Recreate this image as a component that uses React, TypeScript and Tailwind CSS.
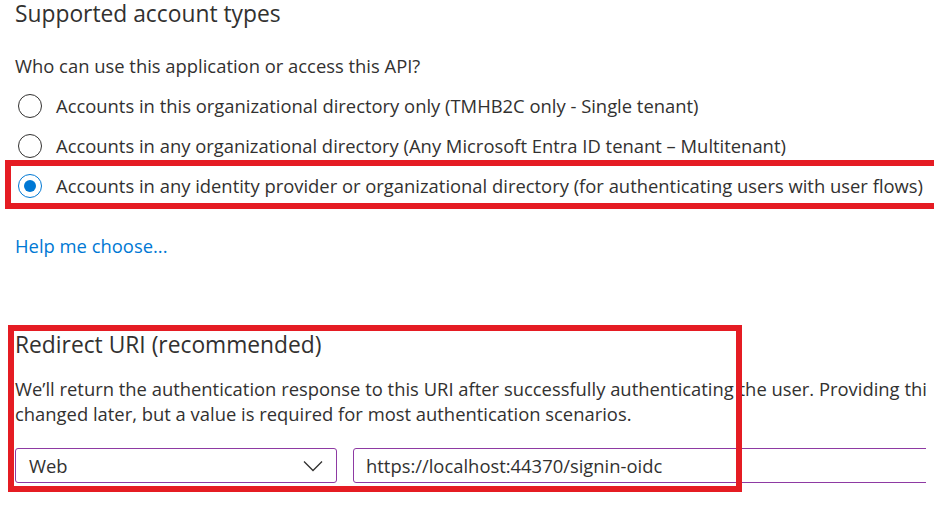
const textColor = 'text-[#323130]';

type RadioOptionProps = {
  label: string;
  checked?: boolean;
};

function RadioOption({ label, checked = false }: RadioOptionProps) {
  return (
    <div className="flex items-center h-[40px] whitespace-nowrap">
      <span
        className={`flex items-center justify-center w-[24px] h-[24px] ml-[3px] rounded-full border ${
          checked ? 'border-[#0078d4]' : 'border-[#323130]'
        }`}
      >
        {checked && <span className="w-[12px] h-[12px] rounded-full bg-[#0078d4]" />}
      </span>
      <span className="ml-[14px] text-[18.4px]">{label}</span>
    </div>
  );
}

export default function App() {
  return (
    <div className="relative w-[934px] h-[505px] bg-white overflow-hidden">
      <div
        className={`w-[926px] h-full overflow-hidden pl-[15px] ${textColor}`}
        style={{ fontFamily: '"Segoe UI", "Open Sans", "Noto Sans", sans-serif' }}
      >
        <div className="h-[28px] leading-[27px] text-[22.8px] whitespace-nowrap">
          Supported account types
        </div>

        <div className="mt-[26px] h-[24px] leading-[24px] text-[18.4px] whitespace-nowrap">
          Who can use this application or access this API?
        </div>

        <div className="mt-[8px]">
          <RadioOption label="Accounts in this organizational directory only (TMHB2C only - Single tenant)" />
          <RadioOption label="Accounts in any organizational directory (Any Microsoft Entra ID tenant – Multitenant)" />
          <RadioOption
            checked
            label="Accounts in any identity provider or organizational directory (for authenticating users with user flows)"
          />
        </div>

        <div className="mt-[28px] h-[24px] leading-[24px] text-[18.4px] text-[#0078d4] whitespace-nowrap">
          Help me choose...
        </div>

        <div className="mt-[74px] h-[28px] leading-[26px] text-[22.8px] whitespace-nowrap">
          Redirect URI (recommended)
        </div>

        <div className="mt-[16px] text-[18.4px] leading-[25px] whitespace-nowrap">
          <div>
            We’ll return the authentication response to this URI after successfully authenticating the
            user. Providing this now is optional and it can be
          </div>
          <div>changed later, but a value is required for most authentication scenarios.</div>
        </div>

        <div className="mt-[22px] flex gap-[16px] whitespace-nowrap">
          <div className="flex items-center justify-between w-[322px] h-[35px] shrink-0 border border-[#8e3aa3] rounded-[3px] pl-[13px] pr-[12px] text-[18.4px]">
            <span>Web</span>
            <svg width="20" height="12" viewBox="0 0 20 12" fill="none" className="mr-[1px]">
              <path d="M1 1.5l9 9 9-9" stroke="#323130" strokeWidth="1.3" />
            </svg>
          </div>
          <div className="flex items-center w-[640px] h-[35px] shrink-0 border border-[#8e3aa3] rounded-[3px] pl-[12px] text-[18.4px]">
            https://localhost:44370/signin-oidc
          </div>
        </div>
      </div>

      <div className="absolute left-[5px] top-[160px] w-[940px] h-[49px] border-[6px] border-[#e51c23]" />
      <div className="absolute left-[8px] top-[325px] w-[734px] h-[167px] border-[6px] border-[#e51c23]" />
    </div>
  );
}
